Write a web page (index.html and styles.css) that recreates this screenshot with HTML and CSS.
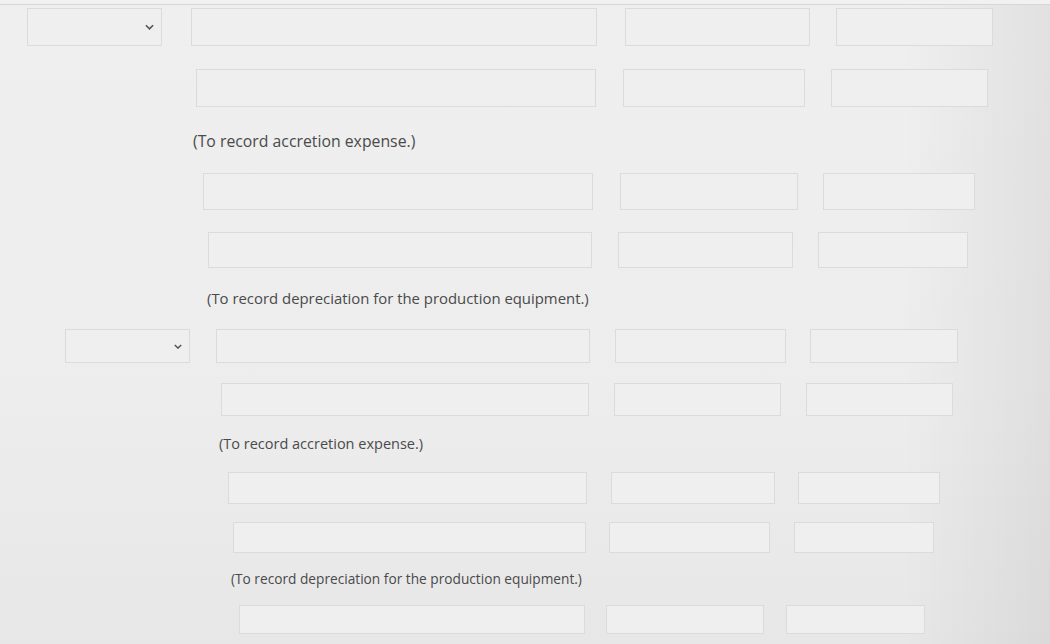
FILE: index.html
```html
<!DOCTYPE html>
<html lang="en">
<head>
<meta charset="utf-8">
<title>Journal entries</title>
<link rel="stylesheet" href="styles.css">
</head>
<body>
<div class="page">
  <div class="topline"></div>

  <div class="row r1">
    <div class="field select"><svg class="chev" viewBox="0 0 10 6" width="9" height="6"><path d="M1 1 L5 5 L9 1" fill="none" stroke="#555" stroke-width="1.8"/></svg></div>
    <div class="field acct"></div><div class="field deb"></div><div class="field cred"></div>
  </div>
  <div class="row r2">
    <div class="field acct"></div><div class="field deb"></div><div class="field cred"></div>
  </div>
  <p class="note n1">(To record accretion expense.)</p>
  <div class="row r3">
    <div class="field acct"></div><div class="field deb"></div><div class="field cred"></div>
  </div>
  <div class="row r4">
    <div class="field acct"></div><div class="field deb"></div><div class="field cred"></div>
  </div>
  <p class="note n2">(To record depreciation for the production equipment.)</p>

  <div class="row r5">
    <div class="field select"><svg class="chev" viewBox="0 0 10 6" width="8" height="5"><path d="M1 1 L5 5 L9 1" fill="none" stroke="#555" stroke-width="1.8"/></svg></div>
    <div class="field acct"></div><div class="field deb"></div><div class="field cred"></div>
  </div>
  <div class="row r6">
    <div class="field acct"></div><div class="field deb"></div><div class="field cred"></div>
  </div>
  <p class="note n3">(To record accretion expense.)</p>
  <div class="row r7">
    <div class="field acct"></div><div class="field deb"></div><div class="field cred"></div>
  </div>
  <div class="row r8">
    <div class="field acct"></div><div class="field deb"></div><div class="field cred"></div>
  </div>
  <p class="note n4">(To record depreciation for the production equipment.)</p>
  <div class="row r9">
    <div class="field acct"></div><div class="field deb"></div><div class="field cred"></div>
  </div>
</div>
</body>
</html>
```
FILE: styles.css
```css
html, body {
  margin: 0;
  padding: 0;
  height: 100%;
  overflow: hidden;
}
body {
  background:
    linear-gradient(to right, rgba(0,0,0,0) 0%, rgba(0,0,0,0) 86%, rgba(0,0,0,0.06) 100%),
    linear-gradient(to bottom, #efefef 0%, #ededed 60%, #e7e7e7 100%);
  font-family: "Open Sans", "Liberation Sans", sans-serif;
  color: #505050;
}
.page {
  display: flex;
  flex-direction: column;
  width: 1050px;
  height: 644px;
}
.topline {
  height: 4px;
  border-bottom: 1px solid #d6d6d6;
  background: #f1f1f1;
}
.row {
  display: flex;
  align-items: center;
  padding-left: var(--pl);
  height: var(--h);
  margin-top: var(--mt);
}
.field {
  box-sizing: border-box;
  height: 100%;
  border: 1px solid #dbdbdb;
  background: #efefef;
  flex: none;
}
.select {
  width: var(--s);
  margin-right: var(--g0);
  display: flex;
  align-items: center;
  justify-content: flex-end;
  padding-right: 7px;
}
.acct { width: var(--a); }
.deb { width: var(--d); margin-left: var(--g1); }
.cred { width: var(--c); margin-left: var(--g2); }

.r1 { --pl: 27px; --s: 135px; --g0: 29px; --a: 406px; --g1: 28px; --d: 185px; --g2: 26px; --c: 157px; --h: 38px; --mt: 3px; }
.r2 { --pl: 196px; --a: 400px; --g1: 27px; --d: 182px; --g2: 26px; --c: 157px; --h: 38px; --mt: 23px; }
.r3 { --pl: 203px; --a: 390px; --g1: 27px; --d: 178px; --g2: 25px; --c: 152px; --h: 37px; --mt: 22px; }
.r4 { --pl: 208px; --a: 384px; --g1: 26px; --d: 175px; --g2: 25px; --c: 150px; --h: 36px; --mt: 22px; }
.r5 { --pl: 65px; --s: 125px; --g0: 26px; --a: 374px; --g1: 25px; --d: 171px; --g2: 24px; --c: 148px; --h: 34px; --mt: 21px; }
.r6 { --pl: 221px; --a: 368px; --g1: 25px; --d: 167px; --g2: 25px; --c: 147px; --h: 33px; --mt: 20px; }
.r7 { --pl: 228px; --a: 359px; --g1: 24px; --d: 164px; --g2: 23px; --c: 142px; --h: 32px; --mt: 18px; }
.r8 { --pl: 233px; --a: 353px; --g1: 23px; --d: 161px; --g2: 24px; --c: 140px; --h: 31px; --mt: 18px; }
.r9 { --pl: 239px; --a: 346px; --g1: 21px; --d: 158px; --g2: 22px; --c: 139px; --h: 29px; --mt: 17px; }

.note {
  margin: 0;
  white-space: nowrap;
  color: #4a4a4a;
}
.n1 { padding-left: 193px; font-size: 15.8px; line-height: 20px; margin-top: 24px; }
.n2 { padding-left: 207px; font-size: 14.9px; line-height: 20px; margin-top: 20px; }
.n3 { padding-left: 219px; font-size: 14.5px; line-height: 20px; margin-top: 18px; }
.n4 { padding-left: 231px; font-size: 13.7px; line-height: 18px; margin-top: 17px; }
```
